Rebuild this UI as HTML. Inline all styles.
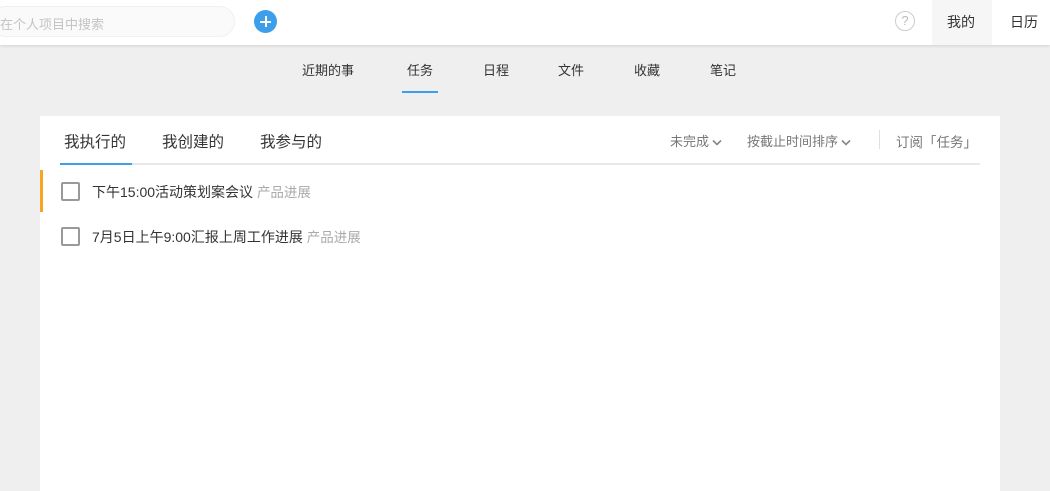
<!DOCTYPE html><html><head><meta charset="utf-8"><style>
*{margin:0;padding:0;box-sizing:border-box}
body{width:1050px;height:491px;overflow:hidden;background:#efefef;font-family:"Liberation Sans","Noto Sans CJK SC",sans-serif;position:relative}
.a{position:absolute;white-space:nowrap}
svg.c{vertical-align:middle;margin-left:3px}
</style></head><body>
<div class="a" style="left:0;top:0;width:1050px;height:45px;background:#fff;box-shadow:0 1px 3px rgba(0,0,0,.12)"></div>
<div class="a" style="left:-10px;top:6px;width:245px;height:31px;background:#fafafa;border-radius:16px;border:1px solid #f0f0f0"></div>
<div class="a" style="left:0;top:14px;font-size:13px;color:#c4c4c4">在个人项目中搜索</div>
<div class="a" style="left:254px;top:10px;width:23px;height:23px;border-radius:50%;background:#3d9ee9"></div>
<div class="a" style="left:260px;top:20.5px;width:11px;height:2px;background:#fff"></div>
<div class="a" style="left:264.5px;top:16px;width:2px;height:11px;background:#fff"></div>
<div class="a" style="left:895px;top:11px;width:20px;height:20px;border-radius:50%;border:1.5px solid #ccc;color:#bbb;font-size:13px;text-align:center;line-height:17px">?</div>
<div class="a" style="left:932px;top:0;width:60px;height:45px;background:#f6f6f6"></div>
<div class="a" style="left:947px;top:12px;font-size:14px;color:#333">我的</div>
<div class="a" style="left:1010px;top:12px;font-size:14px;color:#333">日历</div>
<div class="a" style="left:302px;top:60px;font-size:13px;color:#333">近期的事</div>
<div class="a" style="left:407px;top:60px;font-size:13px;color:#333">任务</div>
<div class="a" style="left:483px;top:60px;font-size:13px;color:#333">日程</div>
<div class="a" style="left:558px;top:60px;font-size:13px;color:#333">文件</div>
<div class="a" style="left:634px;top:60px;font-size:13px;color:#333">收藏</div>
<div class="a" style="left:710px;top:60px;font-size:13px;color:#333">笔记</div>
<div class="a" style="left:402px;top:91px;width:36px;height:2px;background:#3d9ee9"></div>
<div class="a" style="left:40px;top:116px;width:960px;height:375px;background:#fff"></div>
<div class="a" style="left:64px;top:130px;font-size:15.5px;color:#333">我执行的</div>
<div class="a" style="left:162px;top:130px;font-size:15.5px;color:#333">我创建的</div>
<div class="a" style="left:260px;top:130px;font-size:15.5px;color:#333">我参与的</div>
<div class="a" style="left:60px;top:163px;width:920px;height:2px;background:#e8e8e8"></div>
<div class="a" style="left:60px;top:163px;width:72px;height:2px;background:#3d9ee9"></div>
<div class="a" style="left:670px;top:131px;font-size:13px;color:#777">未完成<svg class="c" width="10" height="7" viewBox="0 0 10 7"><path d="M1 1.5L5 5.5L9 1.5" fill="none" stroke="#888" stroke-width="1.6"/></svg></div>
<div class="a" style="left:747px;top:131px;font-size:13px;color:#777">按截止时间排序<svg class="c" width="10" height="7" viewBox="0 0 10 7"><path d="M1 1.5L5 5.5L9 1.5" fill="none" stroke="#888" stroke-width="1.6"/></svg></div>
<div class="a" style="left:879px;top:130px;width:1px;height:19px;background:#e0e0e0"></div>
<div class="a" style="left:896px;top:131px;font-size:13.5px;color:#777">订阅「任务」</div>
<div class="a" style="left:40px;top:170px;width:3px;height:42px;background:#f5a623"></div>
<div class="a" style="left:61px;top:182px;width:19px;height:19px;border:2px solid #999;border-radius:2px"></div>
<div class="a" style="left:92px;top:181px;font-size:14px;color:#333">下午15:00活动策划案会议 <span style="color:#aaa;font-size:13.5px">产品进展</span></div>
<div class="a" style="left:61px;top:227px;width:19px;height:19px;border:2px solid #999;border-radius:2px"></div>
<div class="a" style="left:92px;top:226px;font-size:14px;color:#333">7月5日上午9:00汇报上周工作进展 <span style="color:#aaa;font-size:13.5px">产品进展</span></div>
</body></html>
